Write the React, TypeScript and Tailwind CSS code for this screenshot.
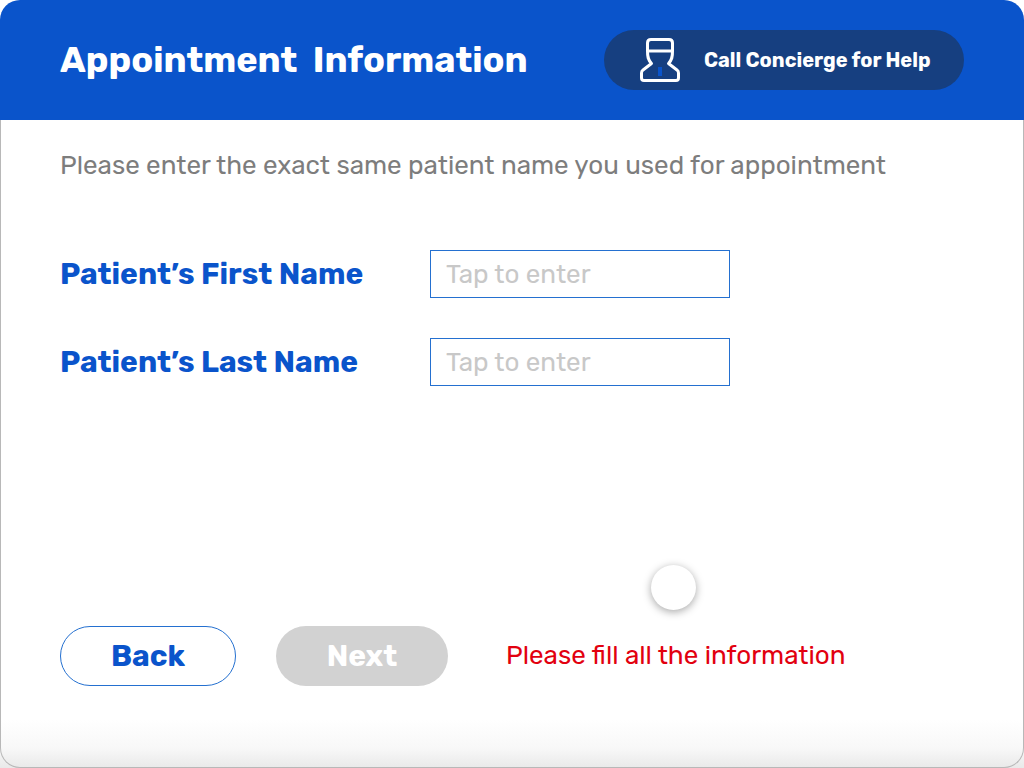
import { useState } from 'react';

interface NameFieldProps {
  id: string;
  label: string;
  value: string;
  onChange: (value: string) => void;
}

function ConciergeIcon() {
  return (
    <svg className="w-10 h-11 shrink-0" viewBox="0 0 40 44" fill="none" aria-hidden="true">
      <path
        d="M7.5 13V5Q7.5 1.5 11 1.5H29Q32.5 1.5 32.5 5V13C32.5 19 32 22 28.5 25.5L37 32Q38.5 33 38.5 35V40Q38.5 42.5 36 42.5H4Q1.5 42.5 1.5 40V35Q1.5 33 3 32L11.5 25.5C8 22 7.500 19 7.500 13Z"
        stroke="white"
        strokeWidth="3"
        strokeLinejoin="round"
      />
      <path d="M7.5 13H32.5" stroke="white" strokeWidth="3" />
      <rect x="18" y="29" width="4" height="9" fill="#0a54cb" />
    </svg>
  );
}

function NameField({ id, label, value, onChange }: NameFieldProps) {
  return (
    <div className="flex items-center">
      <label htmlFor={id} className="w-[370px] shrink-0 text-[30px] leading-9 font-bold text-[#0a54cb]">
        {label}
      </label>
      <input
        id={id}
        type="text"
        value={value}
        onChange={(e) => onChange(e.target.value)}
        placeholder="Tap to enter"
        className="w-[300px] h-12 px-[15px] border border-[#2470d0] bg-white text-[26px] text-gray-700 placeholder:text-[#c8c8c8] outline-none"
      />
    </div>
  );
}

export default function App() {
  const [firstName, setFirstName] = useState('');
  const [lastName, setLastName] = useState('');
  const incomplete = !firstName || !lastName;

  return (
    <div className="relative min-h-screen flex flex-col font-['Rubik','Inter',sans-serif] bg-[linear-gradient(to_top,#e9e9e9_0px,#f8f8f8_20px,#ffffff_48px)]">
      {/* Header */}
      <header className="h-[120px] px-[60px] flex items-center justify-between rounded-t-[20px] bg-[#0a54cb]">
        <h1 className="text-4xl font-bold text-white whitespace-pre">Appointment  Information</h1>
        <button type="button" className="w-[360px] h-[60px] pl-9 flex items-center gap-6 rounded-full bg-[#163f80] text-white">
          <ConciergeIcon />
          <span className="text-xl font-bold whitespace-nowrap">Call Concierge for Help</span>
        </button>
      </header>

      <main className="flex-1 flex flex-col px-[59px] pt-7 pb-[81px] rounded-b-[20px] border border-t-0 border-[#b8b8b8]">
        <p className="text-[26px] leading-9 text-[#7d7d7d]">
          Please enter the exact same patient name you used for appointment
        </p>

        {/* Name form */}
        <div className="mt-[66px] flex flex-col gap-10">
          <NameField id="first-name" label="Patient’s First Name" value={firstName} onChange={setFirstName} />
          <NameField id="last-name" label="Patient’s Last Name" value={lastName} onChange={setLastName} />
        </div>

        {/* Actions */}
        <div className="mt-auto flex items-center">
          <button type="button" className="w-44 h-[60px] rounded-full border border-[#2470d0] bg-white text-[30px] font-bold text-[#0a54cb]">
            Back
          </button>
          <button type="button" disabled={incomplete} className="ml-10 w-[172px] h-[60px] rounded-full bg-[#0a54cb] disabled:bg-[#d2d2d2] text-[30px] font-bold text-white">
            Next
          </button>
          {incomplete && <p role="alert" className="ml-[58px] text-[26px] leading-9 text-[#e2000f]">Please fill all the information</p>}
        </div>
      </main>

      {/* Touch pointer */}
      <div className="absolute left-[651px] top-[565px] w-[45px] h-[45px] rounded-full bg-white shadow-[0_2px_8px_rgba(0,0,0,0.35)] pointer-events-none" />
    </div>
  );
}
